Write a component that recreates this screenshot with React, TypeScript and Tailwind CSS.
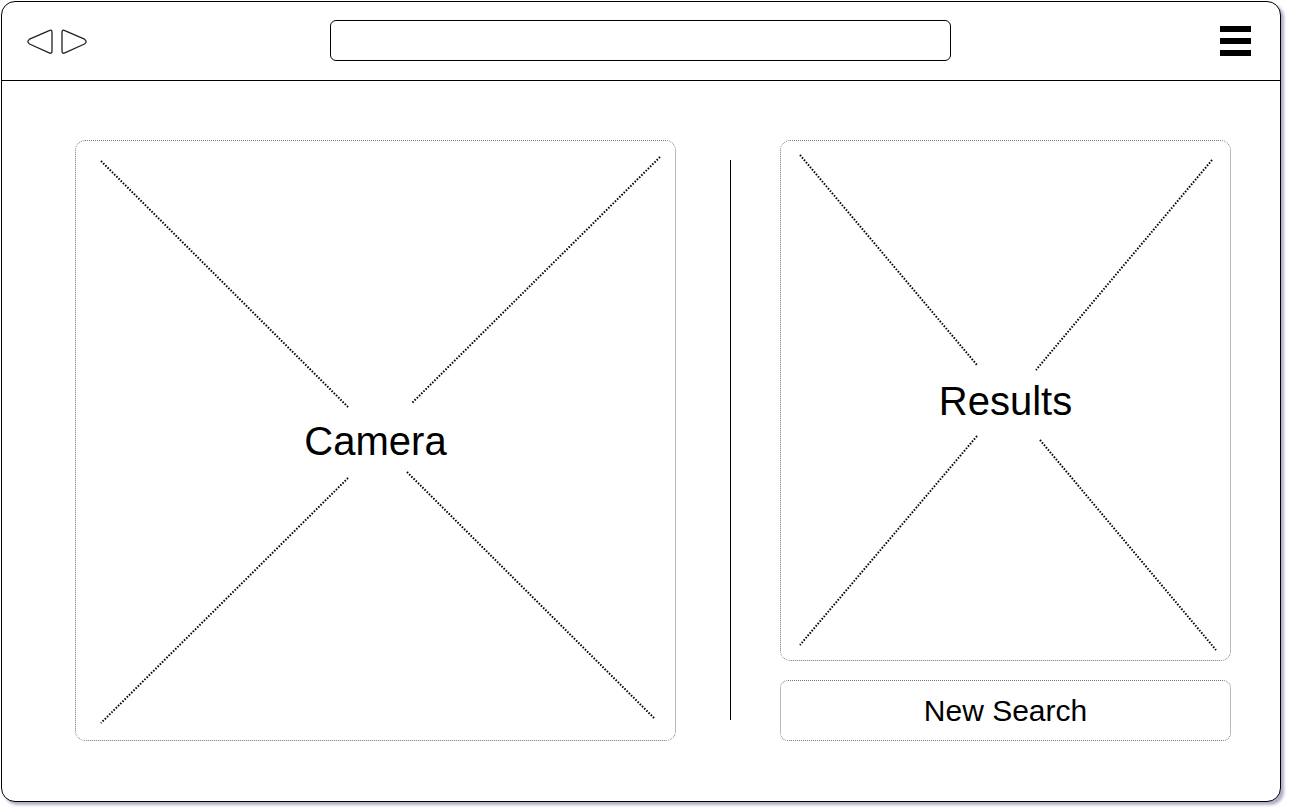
import React from "react";

const Dots = ({ segs }: { segs: [number, number, number, number][] }) => (
  <svg className="absolute inset-0 w-full h-full pointer-events-none" xmlns="http://www.w3.org/2000/svg">
    {segs.map(([x1, y1, x2, y2], i) => (
      <line key={i} x1={x1} y1={y1} x2={x2} y2={y2} stroke="#000" strokeWidth={2} strokeDasharray="1.5 1.6" />
    ))}
  </svg>
);

export default function App() {
  return (
    <div className="w-[1293px] h-[812px] bg-white relative" style={{ fontFamily: '"Liberation Sans", Arial, sans-serif' }}>
      <div className="absolute left-[1px] top-[1px] w-[1280px] h-[801px] border border-black rounded-[14px] shadow-[3px_3px_3px_rgba(110,110,150,0.55)] flex flex-col bg-white">
        {/* header */}
        <div className="h-[79px] border-b border-black flex items-center relative">
          <svg className="absolute left-[23px] top-[26px]" width="66" height="28" viewBox="0 0 66 28">
            <path d="M27 4.5 Q27 1.2 24.2 2.6 L4.5 11.2 Q1.3 13.6 4.5 16 L24.2 24.8 Q27 26.2 27 23 Z" fill="none" stroke="#222" strokeWidth="1.3" strokeLinejoin="round" />
            <path d="M37 4.5 Q37 1.2 39.8 2.6 L59.5 11.2 Q62.7 13.6 59.5 16 L39.8 24.8 Q37 26.2 37 23 Z" fill="none" stroke="#222" strokeWidth="1.3" strokeLinejoin="round" />
          </svg>
          <div className="absolute left-[328px] top-[18px] w-[621px] h-[41px] border border-black rounded-[6px]" />
          <div className="absolute left-[1218px] top-[24px] w-[31px] flex flex-col gap-[6px]">
            <div className="h-[6px] bg-black" />
            <div className="h-[6px] bg-black" />
            <div className="h-[6px] bg-black" />
          </div>
        </div>
        {/* content */}
        <div className="flex pl-[73px] pt-[59px]">
          <div className="relative w-[601px] h-[601px] border border-dotted border-[#777] rounded-[10px] flex items-center justify-center">
            <Dots
              segs={[
                [25, 20, 273, 267],
                [584, 16, 336, 262],
                [272, 337, 25, 582],
                [331, 331, 579, 578],
              ]}
            />
            <span className="text-[40px] text-black leading-none relative">Camera</span>
          </div>
          <div className="w-[1px] h-[560px] bg-black ml-[54px] mt-[20px]" />
          <div className="flex flex-col ml-[49px] gap-[19px]">
            <div className="relative w-[451px] h-[521px] border border-dotted border-[#777] rounded-[10px] flex items-center justify-center">
              <Dots
                segs={[
                  [19, 14, 196, 224],
                  [431, 19, 255, 229],
                  [196, 295, 19, 504],
                  [259, 299, 435, 509],
                ]}
              />
              <span className="text-[40px] text-black leading-none relative">Results</span>
            </div>
            <div className="w-[451px] h-[61px] border border-dotted border-[#777] rounded-[8px] flex items-center justify-center">
              <span className="text-[30px] text-black leading-none">New Search</span>
            </div>
          </div>
        </div>
      </div>
    </div>
  );
}
